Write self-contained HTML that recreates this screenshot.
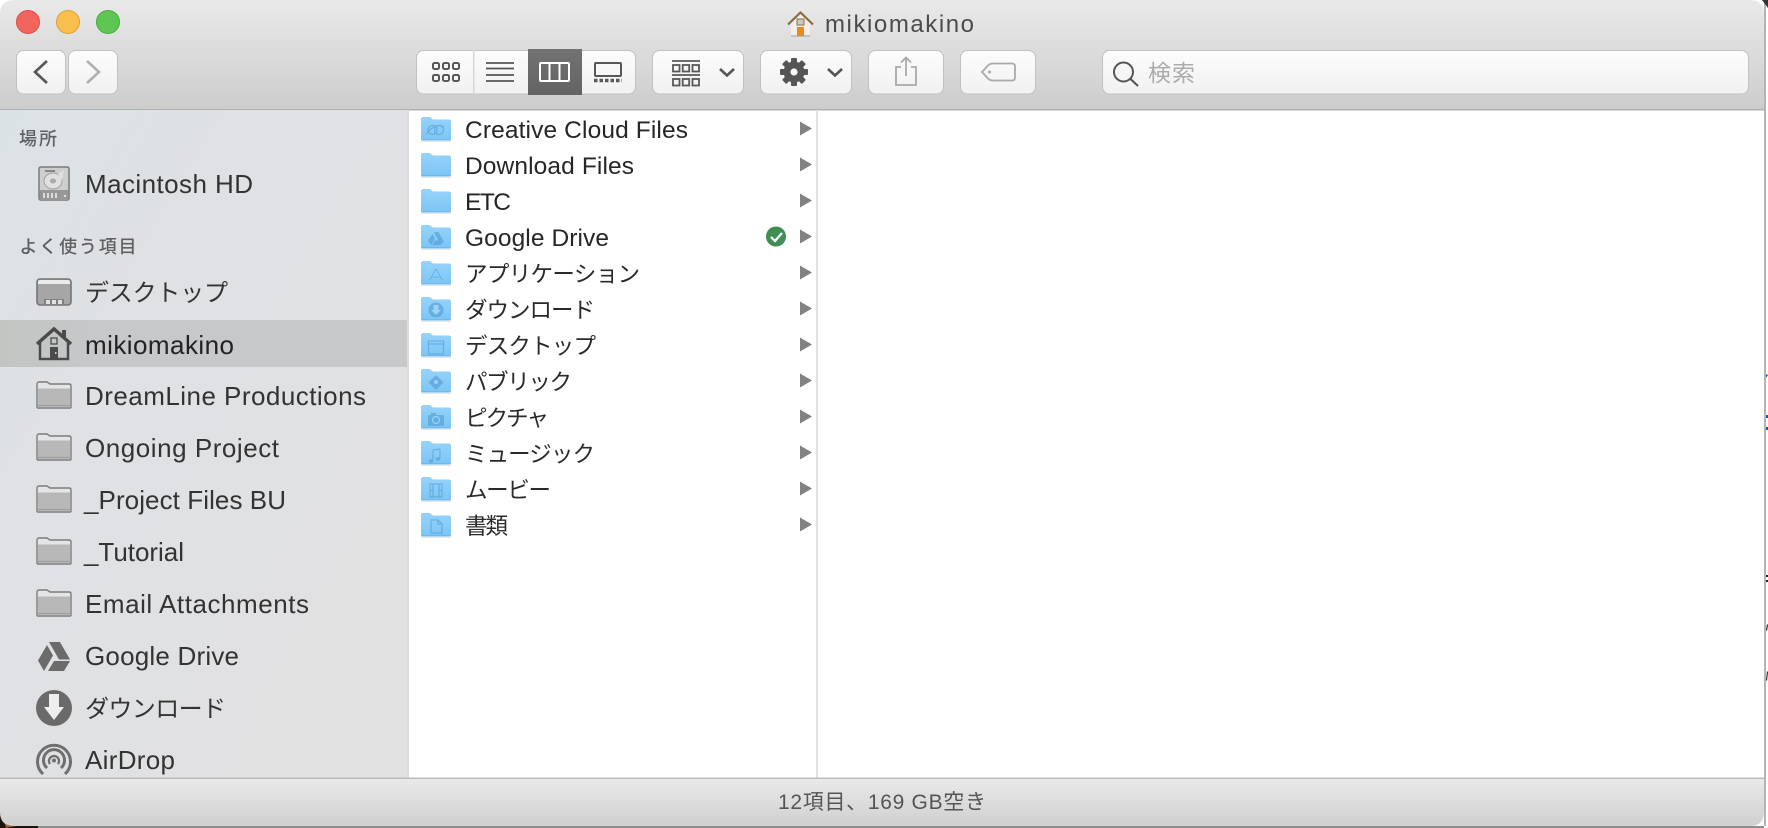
<!DOCTYPE html>
<html lang="ja"><head><meta charset="utf-8"><title>mikiomakino</title>
<style>
html,body{margin:0;padding:0;background:#fff;width:1768px;height:828px;overflow:hidden}
svg{display:block}
text{font-family:"Liberation Sans","Noto Sans CJK JP",sans-serif}
.s{font-size:26px;fill:#333}
.c{font-size:24.5px;fill:#262626}
.k{font-size:24px;fill:#333;font-family:"Noto Sans CJK JP","Liberation Sans",sans-serif}
.l{font-size:22.5px;fill:#2a2a2a;font-family:"Noto Sans CJK JP","Liberation Sans",sans-serif}
.h{font-size:18px;fill:#5f6062;font-weight:500;font-family:"Noto Sans CJK JP","Liberation Sans",sans-serif}
.b{fill:url(#btn);stroke:#c2c2c2;stroke-width:1}
</style></head><body>
<svg width="1768" height="828" viewBox="0 0 1768 828" xmlns="http://www.w3.org/2000/svg">
<defs>
<linearGradient id="tb" x1="0" y1="0" x2="0" y2="1"><stop offset="0" stop-color="#e9e9e9"/><stop offset="1" stop-color="#cdcdcd"/></linearGradient>
<linearGradient id="st" x1="0" y1="0" x2="0" y2="1"><stop offset="0" stop-color="#e9e9e9"/><stop offset="1" stop-color="#d0d0d0"/></linearGradient>
<linearGradient id="btn" x1="0" y1="0" x2="0" y2="1"><stop offset="0" stop-color="#fcfcfc"/><stop offset="1" stop-color="#f1f1f1"/></linearGradient>
<linearGradient id="sel" x1="0" y1="0" x2="0" y2="1"><stop offset="0" stop-color="#727272"/><stop offset="1" stop-color="#636363"/></linearGradient>
<linearGradient id="sb" x1="0" y1="0" x2="1" y2="1"><stop offset="0" stop-color="#dbe2e6"/><stop offset=".3" stop-color="#dfe1e4"/><stop offset="1" stop-color="#e2e1e2"/></linearGradient>
<linearGradient id="sr" x1="0" y1="0" x2="1" y2="0"><stop offset="0" stop-color="#c2c5c2"/><stop offset=".25" stop-color="#c7c8ca"/><stop offset="1" stop-color="#c7c8ca"/></linearGradient>
<linearGradient id="bf" x1="0" y1="0" x2="0" y2="1"><stop offset="0" stop-color="#97d3fb"/><stop offset="1" stop-color="#7cc5f6"/></linearGradient>
<symbol id="gf" viewBox="0 0 36 28" width="36" height="28">
<path d="M1 3.500Q1 1 3 1H11L14 3H33Q35 3 35 5V26Q35 27 34 27H2Q1 27 1 26Z" fill="#e4e5e7" stroke="#7c7c7c" stroke-width="1.400"/>
<path d="M2 7.500H34V26H2Z" fill="#b8b8b8"/>
<path d="M2 24.500H34" stroke="#a0a0a0" stroke-width="1.200"/>
</symbol>
<symbol id="bfo" viewBox="0 0 30 25" width="30" height="25">
<path d="M0 24H30V25H0Z" fill="#e4e4e4"/>
<path d="M0 2Q0 0 2 0H9L12 2.500H28Q30 2.500 30 4.500V22Q30 23.500 28.500 23.500H1.500Q0 23.500 0 22Z" fill="url(#bf)"/>
<path d="M0.500 22.900H29.500" stroke="#68afe3" stroke-width="1"/>
</symbol>
</defs>

<rect width="1768" height="828" fill="#fff"/>

<!-- outer edges -->
<rect x="1764" y="0" width="2" height="826" fill="#b4b4b4"/>
<rect x="38" y="826" width="1726" height="2" fill="#8d8d8d"/>
<path d="M0 812V828H38V826H14Q3 825 0 812Z" fill="#1d130c"/>
<path d="M3 818Q8 825 16 826L6 828Z" fill="#8a5f37"/>
<path d="M1762 0H1768V8Z" fill="#333"/>
<path d="M1766 374l2 1-2 3zM1766 415h2v3h-2zM1766 427h2v3h-2z" fill="#1f55a8"/>
<path d="M1766 575h2v2h-2zM1766 580h2v2h-2zM1766 630l1-6 1 1-1 6zM1766 680l1-9 1 1-1 9z" fill="#222"/>

<!-- title / toolbar -->
<path d="M0 14Q0 0 14 0H1750Q1764 0 1764 14V109H0Z" fill="url(#tb)"/>
<rect x="0" y="109" width="1764" height="1.500" fill="#b0b0b0"/>

<!-- traffic lights -->
<circle cx="28" cy="22" r="11.500" fill="#f1655c" stroke="#dc4f45" stroke-width="1"/>
<circle cx="68" cy="22" r="11.500" fill="#f8bf4c" stroke="#dea034" stroke-width="1"/>
<circle cx="108" cy="22" r="11.500" fill="#60c653" stroke="#4cab40" stroke-width="1"/>

<!-- title -->
<g>
<path d="M800.500 12L788 24H791V36H810V24H813Z" fill="#f3efe8"/>
<path d="M788 24.500L800.500 12.500L813 24.500" fill="none" stroke="#8a6a42" stroke-width="2.200"/>
<rect x="797" y="19" width="7" height="6" fill="#cfc6b8" stroke="#85735c" stroke-width="1"/>
<rect x="797" y="27" width="7" height="9" fill="#e98a20"/>
<path d="M791 36H810" stroke="#9b9b9b" stroke-width="1"/>
</g>
<text x="825" y="32" font-size="24" fill="#4b4b4b" textLength="149">mikiomakino</text>

<!-- buttons -->
<g>
<rect class="b" x="16.500" y="50.500" width="49" height="43.500" rx="7"/>
<rect class="b" x="68.500" y="50.500" width="49" height="43.500" rx="7"/>
<path d="M47 61L35 72L47 83" fill="none" stroke="#555" stroke-width="2.600"/>
<path d="M87 61L99 72L87 83" fill="none" stroke="#b0b0b0" stroke-width="2.600"/>

<rect class="b" x="416.500" y="50.500" width="219" height="43.500" rx="7"/>
<rect x="473" y="50" width="1.500" height="44" fill="#d6d6d6"/>
<rect x="528" y="49" width="54" height="46" fill="url(#sel)"/>

<!-- icon view -->
<g fill="none" stroke="#585858" stroke-width="2">
<rect x="433" y="63" width="6" height="6" rx="1.500"/><rect x="443" y="63" width="6" height="6" rx="1.500"/><rect x="453" y="63" width="6" height="6" rx="1.500"/>
<rect x="433" y="75" width="6" height="6" rx="1.500"/><rect x="443" y="75" width="6" height="6" rx="1.500"/><rect x="453" y="75" width="6" height="6" rx="1.500"/>
</g>
<!-- list -->
<path d="M486 63H514M486 68.500H514M486 75H514M486 81H514" stroke="#555" stroke-width="1.800" fill="none"/>
<!-- columns -->
<g fill="none" stroke="#fff" stroke-width="2"><rect x="540" y="63" width="29" height="18" rx="1"/><path d="M549.500 63V81M559.500 63V81"/></g>
<!-- gallery -->
<rect x="595" y="63" width="26" height="13" rx="1" fill="none" stroke="#585858" stroke-width="2"/>
<path d="M594 80.500h28" stroke="#585858" stroke-width="3.500" stroke-dasharray="3.500 2" fill="none"/>

<!-- group -->
<rect class="b" x="652.500" y="50.500" width="91" height="43.500" rx="7"/>
<path d="M672 61H700M672 75H700" stroke="#585858" stroke-width="1.800"/>
<g fill="none" stroke="#585858" stroke-width="1.800">
<rect x="673" y="65" width="6.500" height="6.500"/><rect x="682.700" y="65" width="6.500" height="6.500"/><rect x="692.500" y="65" width="6.500" height="6.500"/>
<rect x="673" y="79" width="6.500" height="6.500"/><rect x="682.700" y="79" width="6.500" height="6.500"/><rect x="692.500" y="79" width="6.500" height="6.500"/>
</g>
<path d="M720 69L727 75.500L734 69" fill="none" stroke="#555" stroke-width="2.600"/>

<!-- gear -->
<rect class="b" x="760.500" y="50.500" width="91" height="43.500" rx="7"/>
<g transform="translate(794 72)" fill="#555">
<circle r="10.500"/>
<rect x="-3" y="-14" width="6" height="28" rx="1"/>
<rect x="-3" y="-14" width="6" height="28" rx="1" transform="rotate(45)"/>
<rect x="-3" y="-14" width="6" height="28" rx="1" transform="rotate(90)"/>
<rect x="-3" y="-14" width="6" height="28" rx="1" transform="rotate(135)"/>
<circle r="3.600" fill="#f7f7f7"/>
</g>
<path d="M828 69L835 75.500L842 69" fill="none" stroke="#555" stroke-width="2.600"/>

<!-- share -->
<rect class="b" x="868.500" y="50.500" width="75" height="43.500" rx="7"/>
<path d="M901 67H896V85H916V67H911M906 76V58M901 62.500L906 57.500L911 62.500" fill="none" stroke="#a9a9a9" stroke-width="1.800"/>

<!-- tag -->
<rect class="b" x="960.500" y="50.500" width="75" height="43.500" rx="7"/>
<path d="M993 63.500H1012Q1015 63.500 1015 66.500V77.500Q1015 80.500 1012 80.500H993Q990 80.500 988 78.500L982 72L988 65.500Q990 63.500 993 63.500Z" fill="none" stroke="#a9a9a9" stroke-width="1.800"/>
<circle cx="989.500" cy="72" r="1.500" fill="#a9a9a9"/>

<!-- search -->
<rect class="b" x="1102.500" y="50.500" width="646" height="43.500" rx="7"/>
<circle cx="1123.500" cy="72" r="9.500" fill="none" stroke="#555" stroke-width="2"/>
<path d="M1130.500 79L1138 86" stroke="#555" stroke-width="2.200" fill="none"/>
<text x="1148" y="81" font-size="23" fill="#ababab" style="font-family:'Noto Sans CJK JP','Liberation Sans',sans-serif" textLength="47">検索</text>
</g>

<!-- sidebar -->
<rect x="0" y="110" width="407" height="668" fill="url(#sb)"/>
<rect x="407" y="110" width="2" height="668" fill="#dcdcdc"/>
<rect x="0" y="320" width="407" height="47" fill="url(#sr)"/>

<text class="h" x="19" y="145" textLength="38">場所</text>
<text class="h" x="19.500" y="253" textLength="117">よく使う項目</text>

<!-- HD -->
<g>
<path d="M41 167H67Q69 167 69 169V198Q69 200 67 200H41Q39 200 39 198V169Q39 167 41 167Z" fill="#cdcece" stroke="#7a7a7a" stroke-width="1.500"/>
<path d="M39.500 190H68.500V198Q68.500 200 67 200H41Q39.500 200 39.500 198Z" fill="#979797"/>
<path d="M43 193h2v5h-2zM47 193h2v5h-2zM51 193h2v5h-2zM55 193h2v5h-2z" fill="#dcdcdc"/>
<circle cx="65" cy="196" r="1.200" fill="#ddd"/>
<path d="M45 171H55" stroke="#777" stroke-width="1.600"/>
<ellipse cx="53" cy="181" rx="9" ry="8" fill="#e0e0e0" stroke="#a0a0a0"/>
<ellipse cx="53" cy="181" rx="3" ry="2.500" fill="#aaa"/>
<path d="M58 174L64 170L62 180Z" fill="#e0e0e0"/>
</g>
<text class="s" x="85" y="193" textLength="168">Macintosh HD</text>

<!-- desktop -->
<g>
<rect x="37" y="279" width="34" height="26" rx="3" fill="#a6a6a6" stroke="#757575" stroke-width="1.600"/>
<path d="M38 284V282Q38 280 40 280H68Q70 280 70 282V284Z" fill="#ececec"/>
<path d="M44 304V299H64V304Z" fill="#808080"/>
<path d="M46 300h4v4h-4zM52 300h4v4h-4zM58 300h4v4h-4z" fill="#e2e2e2"/>
</g>
<text class="k" x="85" y="301" textLength="143">デスクトップ</text>

<!-- home -->
<g>
<path d="M40 340V359H68V340" fill="none" stroke="#4b4b4b" stroke-width="2.500"/>
<path d="M37 344L54 329L71 344" fill="none" stroke="#4b4b4b" stroke-width="3.500"/>
<rect x="62" y="330" width="4" height="7" fill="#4b4b4b"/>
<rect x="51" y="338" width="6" height="6" fill="none" stroke="#4b4b4b" stroke-width="1.300"/>
<rect x="50" y="347" width="8" height="13" fill="#4b4b4b"/>
<rect x="55" y="352" width="1.500" height="2" fill="#ccc"/>
</g>
<text class="s" x="85" y="354" textLength="149" style="fill:#222">mikiomakino</text>

<!-- folders -->
<use href="#gf" x="36" y="381"/>
<use href="#gf" x="36" y="433"/>
<use href="#gf" x="36" y="485"/>
<use href="#gf" x="36" y="537"/>
<use href="#gf" x="36" y="589"/>
<text class="s" x="85" y="405" textLength="281">DreamLine Productions</text>
<text class="s" x="85" y="457" textLength="194">Ongoing Project</text>
<text class="s" x="84" y="509" textLength="202">_Project Files BU</text>
<text class="s" x="84" y="561" textLength="100">_Tutorial</text>
<text class="s" x="85" y="613" textLength="224">Email Attachments</text>

<!-- gdrive -->
<path d="M49 642H60L70 659.500H59ZM47 645L53 655.500L44 671L38 660.500ZM48 671L54 661H70L64 671Z" fill="#6b6b6b"/>
<text class="s" x="85" y="665" textLength="154">Google Drive</text>

<!-- download -->
<circle cx="54" cy="708" r="18" fill="#6a6a6a"/>
<path d="M49 694H59V707H64L54 720L44 707H49Z" fill="#eee"/>
<text class="k" x="85" y="717" textLength="141">ダウンロード</text>

<!-- airdrop -->
<g fill="none" stroke="#6f6f6f" stroke-width="3">
<path d="M43 774A16.500 16.500 0 1 1 65 774"/>
<path d="M47 768A10.500 10.500 0 1 1 61 768"/>
<path d="M50 764A5 5 0 1 1 58 764" stroke-width="2.300"/>
</g>
<circle cx="54" cy="760.500" r="2" fill="#6f6f6f"/>
<text class="s" x="85" y="769" textLength="90">AirDrop</text>

<!-- columns -->
<rect x="816" y="110" width="2" height="668" fill="#e2e2e2"/>

<use href="#bfo" x="421" y="117"/>
<use href="#bfo" x="421" y="153"/>
<use href="#bfo" x="421" y="189"/>
<use href="#bfo" x="421" y="225"/>
<use href="#bfo" x="421" y="261"/>
<use href="#bfo" x="421" y="297"/>
<use href="#bfo" x="421" y="333"/>
<use href="#bfo" x="421" y="369"/>
<use href="#bfo" x="421" y="405"/>
<use href="#bfo" x="421" y="441"/>
<use href="#bfo" x="421" y="477"/>
<use href="#bfo" x="421" y="513"/>

<!-- folder glyphs -->
<g opacity=".6">
<g fill="none" stroke="#4f9bd4" stroke-width="1.200">
<circle cx="432.500" cy="130" r="4.500"/><circle cx="439" cy="130" r="4.500"/>
<path d="M426 134Q436 122 444 127"/>
</g>
<path d="M434 232H438.500L444 242H439ZM432.500 234L435 238.500L431 245L428 240.500ZM432 245L435 240.500H444L441 245Z" fill="#4f9bd4"/>
<path d="M436 269L429 281M436 269L443 281M431 277H441" stroke="#4f9bd4" stroke-width="1.200" fill="none" stroke-dasharray="2 .8"/>
<circle cx="436" cy="310" r="7.500" fill="#4f9bd4"/><path d="M433.500 305H438.500V310H441L436 315L431 310H433.500Z" fill="#a5d9fa"/>
<rect x="428.500" y="341" width="15" height="13" fill="none" stroke="#4f9bd4" stroke-width="1.200"/><path d="M428.500 344H443.500" stroke="#4f9bd4" stroke-width="1.200"/>
<path d="M436 375L443.500 382.500L436 390L428.500 382.500Z" fill="#4f9bd4"/><circle cx="436" cy="382" r="2" fill="#a5d9fa"/>
<rect x="428" y="415" width="16" height="11" rx="1" fill="#4f9bd4"/><rect x="431" y="413" width="5" height="3" fill="#4f9bd4"/><circle cx="436" cy="420" r="3.500" fill="none" stroke="#a5d9fa" stroke-width="1.200"/>
<path d="M433 450V460M440 449V458M433 450L440 449" stroke="#4f9bd4" stroke-width="1.200" fill="none"/><ellipse cx="431" cy="461" rx="2.300" ry="1.700" fill="#4f9bd4"/><ellipse cx="438" cy="459" rx="2.300" ry="1.700" fill="#4f9bd4"/>
<g fill="none" stroke="#4f9bd4" stroke-width="1.200"><rect x="430" y="484" width="12" height="13"/><path d="M433 484V497M439 484V497M430 490.500H433M439 490.500H442"/></g>
<path d="M431 520H438L442 524V533H431ZM438 520V524H442" fill="none" stroke="#4f9bd4" stroke-width="1.200"/>
</g>

<!-- list text -->
<text class="c" x="465" y="138" textLength="223">Creative Cloud Files</text>
<text class="c" x="465" y="174" textLength="169">Download Files</text>
<text class="c" x="465" y="210" textLength="46">ETC</text>
<text class="c" x="465" y="246" textLength="144">Google Drive</text>
<text class="l" x="465" y="282" textLength="175">アプリケーション</text>
<text class="l" x="465" y="318" textLength="130">ダウンロード</text>
<text class="l" x="465" y="354" textLength="131">デスクトップ</text>
<text class="l" x="465" y="390" textLength="107">パブリック</text>
<text class="l" x="465" y="426" textLength="84">ピクチャ</text>
<text class="l" x="465" y="462" textLength="130">ミュージック</text>
<text class="l" x="465" y="498" textLength="86">ムービー</text>
<text class="l" x="465" y="534" textLength="43">書類</text>

<!-- check -->
<circle cx="776" cy="236.500" r="10" fill="#3f8f55"/>
<path d="M771 237L775 241L782 233" fill="none" stroke="#fff" stroke-width="2.200"/>

<!-- arrows -->
<g fill="#828282">
<path d="M800 121.500L812 128.500L800 135.500Z"/>
<path d="M800 157.500L812 164.500L800 171.500Z"/>
<path d="M800 193.500L812 200.500L800 207.500Z"/>
<path d="M800 229.500L812 236.500L800 243.500Z"/>
<path d="M800 265.500L812 272.500L800 279.500Z"/>
<path d="M800 301.500L812 308.500L800 315.500Z"/>
<path d="M800 337.500L812 344.500L800 351.500Z"/>
<path d="M800 373.500L812 380.500L800 387.500Z"/>
<path d="M800 409.500L812 416.500L800 423.500Z"/>
<path d="M800 445.500L812 452.500L800 459.500Z"/>
<path d="M800 481.500L812 488.500L800 495.500Z"/>
<path d="M800 517.500L812 524.500L800 531.500Z"/>
</g>

<!-- status bar -->
<path d="M0 778H1764V812Q1764 826 1750 826H14Q0 826 0 812Z" fill="url(#st)"/>
<rect x="0" y="777.500" width="1764" height="1.500" fill="#bcbcbc"/>
<text x="778" y="809" font-size="21" fill="#555" textLength="208">12項目、169 GB空き</text>
</svg>
</body></html>
